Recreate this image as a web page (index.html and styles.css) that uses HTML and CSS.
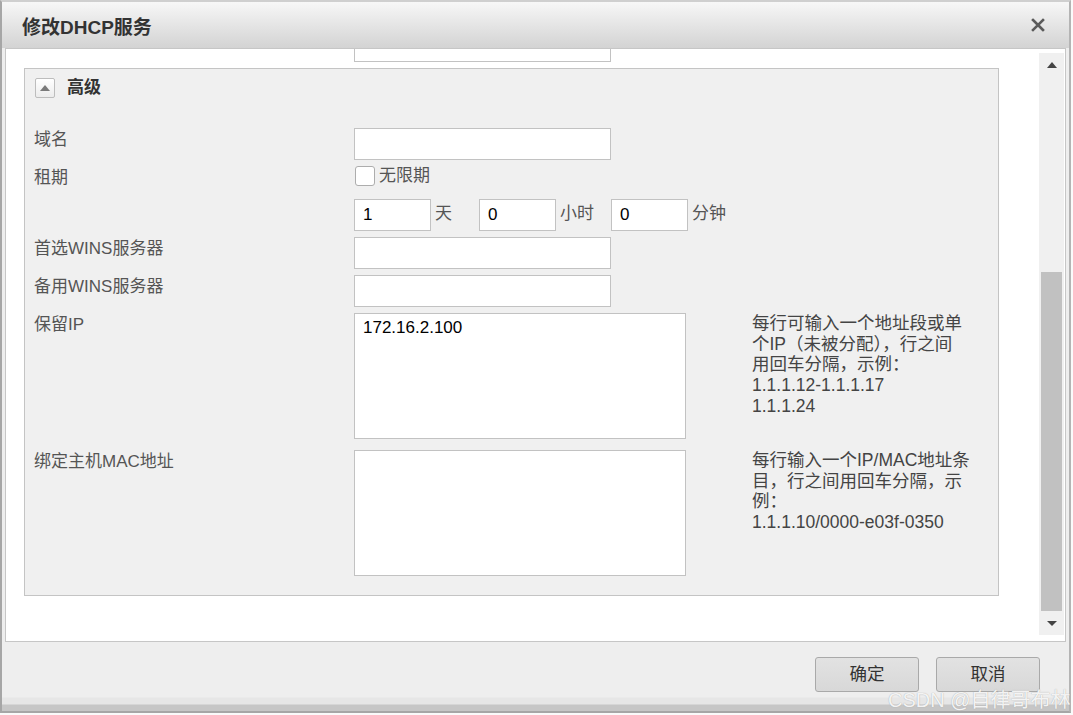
FILE: index.html
```html
<!DOCTYPE html>
<html lang="zh-CN">
<head>
    <meta charset="UTF-8">
    <title>修改DHCP服务</title>
    <link rel="stylesheet" href="styles.css">
</head>
<body>

    <div class="dialog">
        <!-- Title bar -->
        <div class="title-bar">
            <span class="title">修改DHCP服务</span>
            <svg class="close" width="14" height="14" viewBox="0 0 14 14">
                <path d="M2 2 L12 12 M12 2 L2 12" stroke="#5a5a5a" stroke-width="2.6" stroke-linecap="square"/>
            </svg>
        </div>

        <!-- Scrolling body -->
        <div class="dialog-body">
            <div class="content">
                <div class="scrolled-field"></div>

                <div class="group">
                    <div class="group-header">
                        <span class="toggle"><span class="arrow-up"></span></span>
                        <span class="group-title">高级</span>
                    </div>

                    <div class="form-row">
                        <label class="form-label">域名</label>
                        <input class="text-input" type="text">
                    </div>

                    <div class="form-row row-check">
                        <label class="form-label">租期</label>
                        <span class="checkbox"></span>
                        <span class="check-text">无限期</span>
                    </div>

                    <div class="form-row">
                        <label class="form-label"></label>
                        <input class="text-input small" type="text" value="1">
                        <span class="unit unit-day">天</span>
                        <input class="text-input small" type="text" value="0">
                        <span class="unit unit-hour">小时</span>
                        <input class="text-input small" type="text" value="0">
                        <span class="unit">分钟</span>
                    </div>

                    <div class="form-row">
                        <label class="form-label">首选WINS服务器</label>
                        <input class="text-input" type="text">
                    </div>

                    <div class="form-row">
                        <label class="form-label">备用WINS服务器</label>
                        <input class="text-input" type="text">
                    </div>

                    <div class="form-row row-tall">
                        <label class="form-label">保留IP</label>
                        <textarea class="text-area">172.16.2.100</textarea>
                        <p class="hint">每行可输入一个地址段或单<br>个IP（未被分配），行之间<br>用回车分隔，示例：<br>1.1.1.12-1.1.1.17<br>1.1.1.24</p>
                    </div>

                    <div class="form-row row-tall row-last">
                        <label class="form-label">绑定主机MAC地址</label>
                        <textarea class="text-area"></textarea>
                        <p class="hint">每行输入一个IP/MAC地址条<br>目，行之间用回车分隔，示<br>例：<br>1.1.1.10/0000-e03f-0350</p>
                    </div>
                </div>
            </div>

            <!-- Scrollbar -->
            <div class="scrollbar">
                <div class="scroll-btn"><span class="arrow-up dark"></span></div>
                <div class="scroll-track"><div class="scroll-thumb"></div></div>
                <div class="scroll-btn"><span class="arrow-down"></span></div>
            </div>
        </div>

        <!-- Footer -->
        <div class="footer">
            <a href="#" class="button">确定</a>
            <a href="#" class="button">取消</a>
        </div>
    </div>

    <div class="watermark">CSDN @自律哥布林</div>

</body>
</html>
```

FILE: styles.css
```css
body {
    margin: 0;
    padding: 0;
    width: 1073px;
    height: 715px;
    background-color: #fafafa;
    font-family: "Liberation Sans", "Noto Sans CJK SC", sans-serif;
    position: relative;
    overflow: hidden;
}

/* Dialog frame */
.dialog {
    width: 1067px;
    height: 709px;
    border: 2px solid #a6a6a6;
    border-top-color: #cfcfcf;
    border-right-color: #b4b4b4;
    display: flex;
    flex-direction: column;
    background: #eeeeee;
}

.title-bar {
    height: 46px;
    flex: none;
    display: flex;
    align-items: center;
    justify-content: space-between;
    padding: 0 24px 0 20px;
    background: linear-gradient(#f7f7f7, #d3d3d3);
}

.title {
    font-size: 19px;
    font-weight: bold;
    color: #333;
}

/* Body with the scroll area */
.dialog-body {
    height: 592px;
    flex: none;
    margin: 0 3px;
    border: 1px solid #c6c6c6;
    background: #fff;
    display: flex;
}

.content {
    flex: 1;
    padding: 0 40px 0 18px;
}

.scrolled-field {
    width: 255px;
    height: 12px;
    margin-left: 330px;
    border: 1px solid #c2c2c2;
    border-top: none;
    background: #fff;
    margin-bottom: 6px;
}

.group {
    border: 1px solid #c4c4c4;
    background: #f0f0f0;
    padding: 9px 10px 19px 9px;
}

.group-header {
    display: flex;
    align-items: center;
    height: 20px;
    margin-bottom: 30px;
    padding-left: 1px;
}

.toggle {
    box-sizing: border-box;
    width: 20px;
    height: 20px;
    border: 1px solid #bdbdbd;
    border-radius: 2px;
    background: linear-gradient(#ffffff, #ececec);
    display: flex;
    align-items: center;
    justify-content: center;
}

.arrow-up {
    width: 0;
    height: 0;
    border-left: 5px solid transparent;
    border-right: 5px solid transparent;
    border-bottom: 6px solid #7a7a7a;
}

.arrow-up.dark {
    border-bottom-color: #444;
}

.arrow-down {
    width: 0;
    height: 0;
    border-left: 5px solid transparent;
    border-right: 5px solid transparent;
    border-top: 5px solid #444;
}

.group-title {
    margin-left: 12px;
    font-size: 17px;
    line-height: 20px;
    font-weight: bold;
    color: #333;
}

/* Form rows */
.form-row {
    display: flex;
    align-items: flex-start;
    height: 32px;
    margin-bottom: 6px;
    font-size: 17px;
    color: #555;
    overflow: hidden;
}

.row-check {
    height: 26px;
    margin-bottom: 7px;
}

.row-tall {
    height: 126px;
    overflow: visible;
}

.row-last {
    margin-bottom: 0;
    margin-top: 11px;
}

.form-label {
    width: 320px;
    flex: none;
    padding-top: 2px;
    line-height: 20px;
}

.text-input {
    box-sizing: border-box;
    width: 257px;
    height: 32px;
    margin: 0;
    padding: 0 8px;
    border: 1px solid #c2c2c2;
    background: #fff;
    font-family: inherit;
    font-size: 17px;
    color: #000;
    outline: none;
}

.text-input.small {
    width: 77px;
}

.unit {
    line-height: 30px;
    margin-left: 4px;
}

.unit-day {
    margin-right: 27px;
}

.unit-hour {
    margin-right: 17px;
}

.checkbox {
    box-sizing: border-box;
    width: 20px;
    height: 20px;
    border: 1px solid #adadad;
    border-radius: 3px;
    background: #fff;
    margin-left: 1px;
}

.check-text {
    margin-left: 4px;
    line-height: 20px;
}

.text-area {
    box-sizing: border-box;
    width: 332px;
    height: 126px;
    margin: 0;
    padding: 4px 8px 3px;
    border: 1px solid #c2c2c2;
    background: #fff;
    font-family: inherit;
    font-size: 17px;
    line-height: 20px;
    color: #000;
    resize: none;
    outline: none;
}

.hint {
    margin: 0 0 0 66px;
    font-size: 17.5px;
    line-height: 20.7px;
    color: #444;
    white-space: nowrap;
}

/* Scrollbar */
.scrollbar {
    width: 25px;
    margin: 4px 1px 6px 0;
    background: #f0f0f0;
    display: flex;
    flex-direction: column;
}

.scroll-btn {
    height: 24px;
    flex: none;
    display: flex;
    align-items: center;
    justify-content: center;
}

.scroll-track {
    flex: 1;
    display: flex;
    flex-direction: column;
    justify-content: flex-end;
    padding: 0 2px;
}

.scroll-thumb {
    height: 339px;
    background: #c1c1c1;
}

/* Footer */
.footer {
    flex: 1;
    display: flex;
    justify-content: flex-end;
    align-items: flex-start;
    gap: 17px;
    padding: 15px 29px 0 0;
    background: linear-gradient(#eeeeee 0, #eeeeee 55px, #e6e6e6 56px, #e6e6e6 62px, #c6c6c6 63px, #c6c6c6 100%);
}

.button {
    box-sizing: border-box;
    width: 104px;
    height: 35px;
    line-height: 33px;
    border: 1px solid #a9a9a9;
    border-radius: 3px;
    background: linear-gradient(#e2e2e2, #d8d8d8);
    color: #333;
    font-size: 17.5px;
    text-align: center;
    text-decoration: none;
}

/* Watermark over the footer */
.watermark {
    position: absolute;
    left: 888px;
    top: 684px;
    font-size: 20px;
    color: rgba(255, 255, 255, 0.9);
    text-shadow: 0 0 1px #9a9a9a;
    white-space: nowrap;
}
```
